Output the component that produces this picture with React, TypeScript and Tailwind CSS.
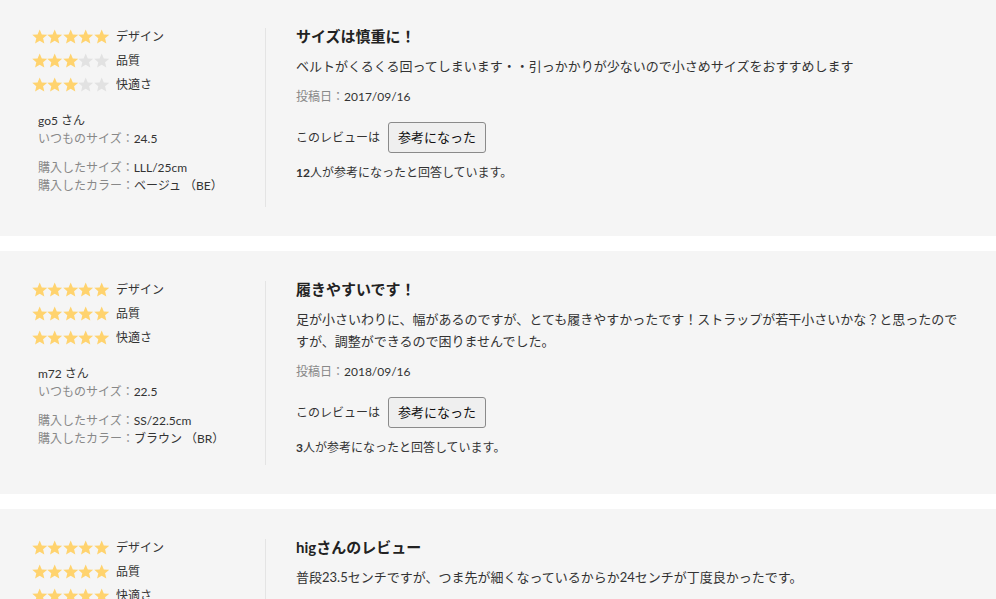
import React from 'react';

type Review = {
  ratings: number[];
  user: string;
  usual: string;
  size: string;
  color: string;
  title: string;
  body: string;
  date: string;
  helpful: number;
};

const reviews: Review[] = [
  {
    ratings: [5, 3, 3],
    user: 'go5',
    usual: '24.5',
    size: 'LLL/25cm',
    color: 'ベージュ （BE）',
    title: 'サイズは慎重に！',
    body: 'ベルトがくるくる回ってしまいます・・引っかかりが少ないので小さめサイズをおすすめします',
    date: '2017/09/16',
    helpful: 12,
  },
  {
    ratings: [5, 5, 5],
    user: 'm72',
    usual: '22.5',
    size: 'SS/22.5cm',
    color: 'ブラウン （BR）',
    title: '履きやすいです！',
    body: '足が小さいわりに、幅があるのですが、とても履きやすかったです！ストラップが若干小さいかな？と思ったのですが、調整ができるので困りませんでした。',
    date: '2018/09/16',
    helpful: 3,
  },
  {
    ratings: [5, 5, 5],
    user: 'hig',
    usual: '23.5',
    size: 'M/24cm',
    color: 'ブラック （BK）',
    title: 'higさんのレビュー',
    body: '普段23.5センチですが、つま先が細くなっているからか24センチが丁度良かったです。',
    date: '2018/08/02',
    helpful: 2,
  },
];

const labels = ['デザイン', '品質', '快適さ'];

const Star: React.FC<{ on: boolean }> = ({ on }) => (
  <svg viewBox="0 0 24 24" className="w-[15.4px] h-[15.4px]">
    <polygon
      points="12,0.8 15.3,8.4 23.6,9.1 17.3,14.6 19.2,22.8 12,18.5 4.8,22.8 6.7,14.6 0.4,9.1 8.7,8.4"
      fill={on ? '#ffd36e' : '#e2e2e2'}
    />
  </svg>
);

const ReviewCard: React.FC<{ r: Review; first?: boolean }> = ({ r, first }) => (
  <div className={`bg-[#f5f5f5] min-h-[238px] pt-[30px] pb-[29px] pl-[32px] pr-[32px] flex ${first ? 'mt-[-2px]' : 'mt-[15px]'}`}>
    <div className="w-[234px] shrink-0 border-r border-[#e4e4e4]">
      <div className="mt-[-3px]">
        {labels.map((label, i) => (
          <div key={label} className="flex items-center h-[24px] gap-[7px]">
            <div className="flex">
              {[0, 1, 2, 3, 4].map((s) => (
                <Star key={s} on={s < r.ratings[i]} />
              ))}
            </div>
            <span className="text-[12px] text-[#333]">{label}</span>
          </div>
        ))}
      </div>
      <div className="pl-[6px] mt-[15px] text-[12px] leading-[18px]">
        <p className="text-[#333]">{r.user} さん</p>
        <p>
          <span className="text-[#888]">いつものサイズ：</span>
          <span className="text-[#333]">{r.usual}</span>
        </p>
        <p className="mt-[11px]">
          <span className="text-[#888]">購入したサイズ：</span>
          <span className="text-[#333]">{r.size}</span>
        </p>
        <p>
          <span className="text-[#888]">購入したカラー：</span>
          <span className="text-[#333]">{r.color}</span>
        </p>
      </div>
    </div>

    <div className="flex-1 pl-[30px] pb-[8px] text-[#333]">
      <h3 className="text-[15px] leading-[16px] font-bold text-[#222]">{r.title}</h3>
      <p className="mt-[11px] text-[13px] leading-[22px]">{r.body}</p>
      <p className="mt-[11px] text-[12px] leading-[18px]">
        <span className="text-[#888]">投稿日：</span>
        <span>{r.date}</span>
      </p>
      <div className="mt-[16px] flex items-center h-[31px]">
        <span className="text-[12px]">このレビューは</span>
        <button className="ml-[8px] h-[31px] px-[9px] bg-[#efefef] border border-[#8a8a8a] rounded-[3px] text-[13px] text-[#111]">
          参考になった
        </button>
      </div>
      <p className="mt-[11px] text-[12px] leading-[18px]">
        <span className="font-bold">{r.helpful}</span>人が参考になったと回答しています。
      </p>
    </div>
  </div>
);

export default function App() {
  return (
    <div
      className="w-[996px] h-[599px] overflow-hidden bg-white"
      style={{ fontFamily: '"Lato", "Noto Sans CJK JP", sans-serif' }}
    >
      {reviews.map((r, i) => (
        <ReviewCard key={i} r={r} first={i === 0} />
      ))}
    </div>
  );
}
